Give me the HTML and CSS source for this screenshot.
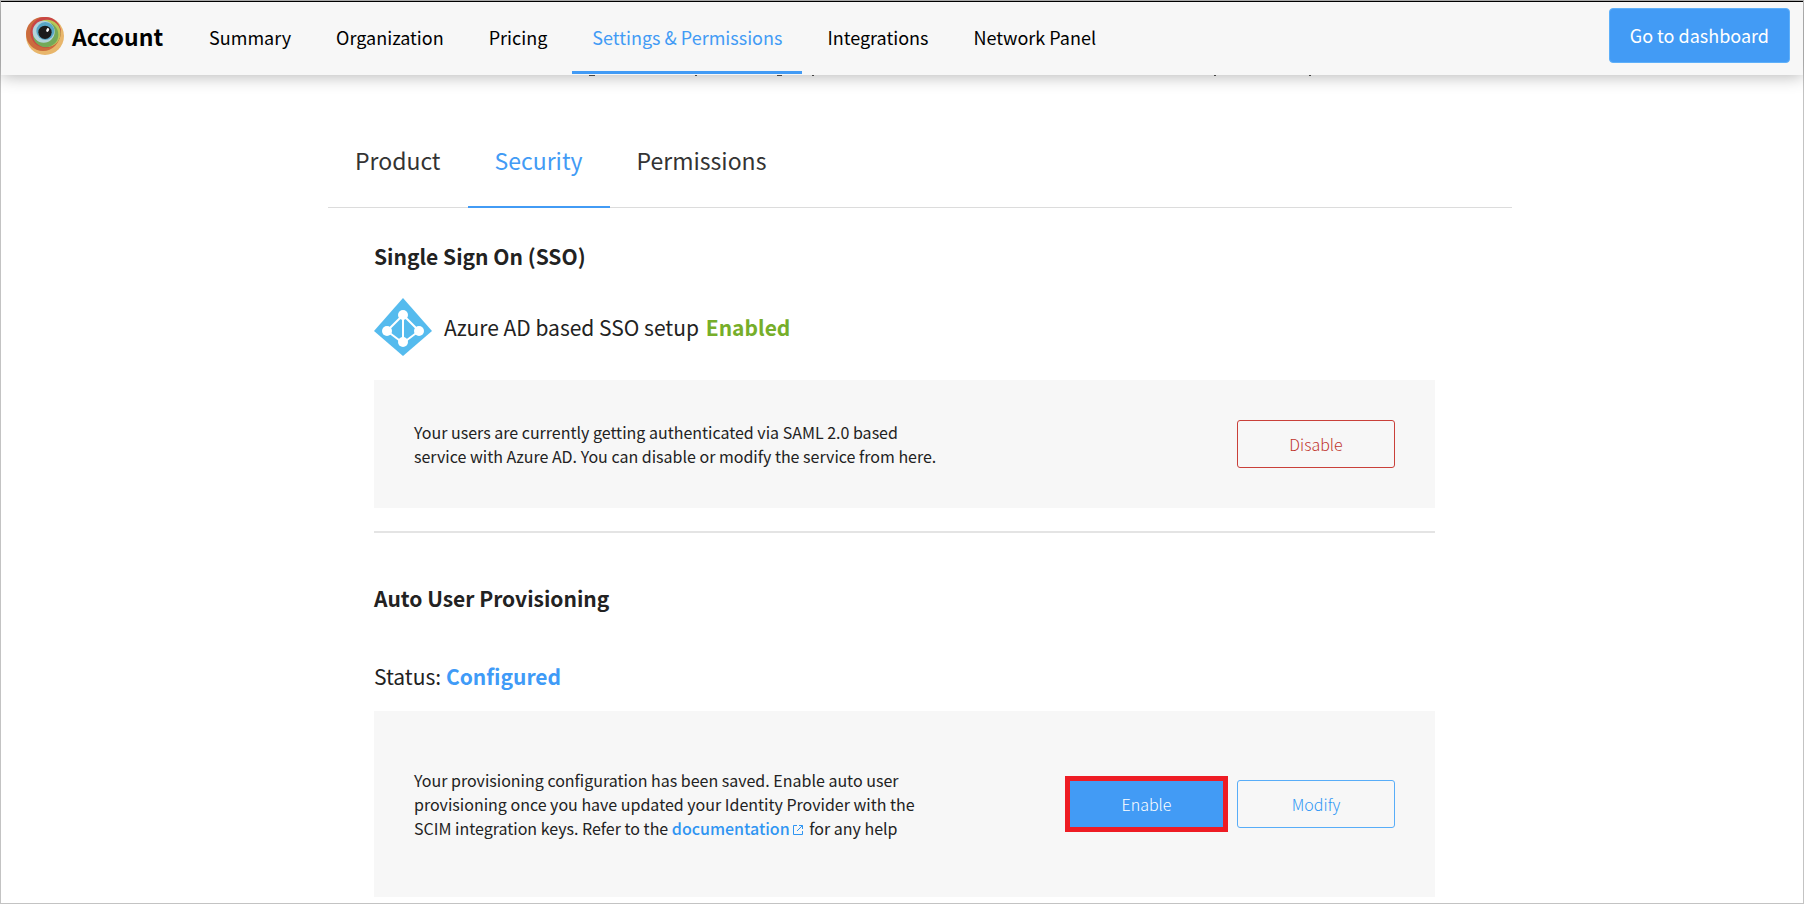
FILE: index.html
```html
<!DOCTYPE html>
<html lang="en">
<head>
<meta charset="utf-8">
<title>Account – Settings &amp; Permissions</title>
<link rel="stylesheet" href="styles.css">
</head>
<body>
<div class="page">
  <header class="topbar">
    <a class="brand" href="#">
      <svg class="brand-logo" viewBox="0 0 114 114" aria-hidden="true">
        <circle cx="57" cy="57" r="57" fill="#e8b66b"/>
        <circle cx="51" cy="51" r="51" fill="#cb6c3e"/>
        <circle cx="59" cy="46" r="46" fill="#c94545"/>
        <circle cx="63" cy="49" r="41" fill="#b9c659"/>
        <circle cx="59" cy="53" r="38" fill="#74a959"/>
        <circle cx="53" cy="44" r="33" fill="#b3d3da"/>
        <circle cx="58" cy="42" r="27" fill="#58a6c6"/>
        <circle cx="57" cy="46" r="20" fill="#1c1c1c"/>
        <ellipse cx="65" cy="39" rx="4" ry="6" fill="#fff" transform="rotate(25 65 39)"/>
      </svg>
      <span>Account</span>
    </a>
    <nav class="nav" aria-label="Account">
      <a class="nav-link" href="#">Summary</a>
      <a class="nav-link" href="#">Organization</a>
      <a class="nav-link" href="#">Pricing</a>
      <a class="nav-link nav-link-active" href="#" aria-current="page">Settings &amp; Permissions</a>
      <a class="nav-link" href="#">Integrations</a>
      <a class="nav-link" href="#">Network Panel</a>
    </nav>
    <button class="button-dashboard" type="button">Go to dashboard</button>
  </header>

  <main class="content">
    <svg class="scrolled-edge" viewBox="0 0 724 1" aria-hidden="true">
      <path d="M0 .5h6M106 .5h2M188 .5h5M223 .5h2M625 .5h2M720 .5h2" stroke="#444"/>
    </svg>
    <div class="tabs">
      <a class="tab" href="#">Product</a>
      <a class="tab tab-active" href="#" aria-current="true">Security</a>
      <a class="tab" href="#">Permissions</a>
    </div>

    <section class="section section-sso">
      <h2 class="section-title">Single Sign On (SSO)</h2>
      <div class="provider">
        <svg class="provider-icon" viewBox="0 0 58 58" aria-hidden="true">
          <path d="M29 0 58 33 29 58 0 33Z" fill="#55bbee"/>
          <path d="M29 17 13 33 29 45 45 33ZM29 17V45" fill="none" stroke="#fff" stroke-width="2"/>
          <g fill="#fff"><circle cx="29" cy="17" r="5"/><circle cx="13" cy="33" r="5"/><circle cx="45" cy="33" r="5"/><circle cx="29" cy="44" r="5"/></g>
        </svg>
        <p class="status-line">Azure AD based SSO setup <strong class="status-enabled">Enabled</strong></p>
      </div>
      <div class="panel">
        <p class="panel-text">Your users are currently getting authenticated via SAML 2.0 based service with Azure AD. You can disable or modify the service from here.</p>
        <div class="actions">
          <button class="button button-danger" type="button">Disable</button>
        </div>
      </div>
    </section>

    <section class="section section-provisioning">
      <h2 class="section-title">Auto User Provisioning</h2>
      <p class="status-line status-provisioning">Status: <strong class="status-configured">Configured</strong></p>
      <div class="panel panel-tall">
        <p class="panel-text">Your provisioning configuration has been saved. Enable auto user provisioning once you have updated your Identity Provider with the SCIM integration keys. Refer to the <a class="doc-link" href="#">documentation<svg class="external" viewBox="0 0 12 12" aria-hidden="true"><path d="M5 1.500H1.500V10.500H10.500V7M7 1.500H10.500V5M10.500 1.500 5 7" fill="none" stroke="currentColor"/></svg></a> for any help</p>
        <div class="actions">
          <span class="highlight"><button class="button button-primary" type="button">Enable</button></span>
          <button class="button button-outline" type="button">Modify</button>
        </div>
      </div>
    </section>
  </main>
</div>
</body>
</html>
```
FILE: styles.css
```css
* { box-sizing: border-box; }

body {
  margin: 0;
  background: #fff;
  color: #222;
  font-family: "Noto Sans CJK JP", "Noto Sans CJK SC", "Noto Sans", sans-serif;
  font-size: 16px;
}

h2, p { margin: 0; }
a { color: inherit; text-decoration: none; }
button { font: inherit; cursor: pointer; }

.page {
  min-height: 100vh;
  border: 1px solid #c3c3c3;
}

.topbar {
  display: flex;
  align-items: stretch;
  height: 74px;
  padding: 0 13px 0 25px;
  border-top: 1px solid #000;
  background: #f7f7f7;
  box-shadow: 0 1px 16px rgba(0, 0, 0, 0.3);
  color: #000;
}

.brand {
  display: flex;
  align-items: center;
  gap: 8px;
  padding-bottom: 6px;
  font-size: 23px;
  font-weight: 700;
}
.brand-logo { width: 38px; height: 38px; }

.nav {
  display: flex;
  gap: 5px;
  margin-left: 26px;
  font-size: 18px;
  font-weight: 400;
}
.nav-link {
  display: flex;
  align-items: center;
  margin-bottom: 1px;
  padding: 0 20px;
  border-bottom: 3px solid transparent;
}
.nav-link-active { border-color: #429bf5; color: #429bf5; }

.button-dashboard {
  align-self: flex-start;
  height: 55px;
  margin: 6px 0 0 auto;
  padding: 0 20px 2px;
  border: 1px solid #5eb0fa;
  border-radius: 4px;
  background: #429bf5;
  color: #fff;
  font-size: 18px;
}

.content {
  max-width: 1220px;
  margin: 0 auto;
  padding-left: 36px;
}

/* Bottom edge of the line scrolled under the top bar */
.scrolled-edge {
  display: block;
  width: 724px;
  height: 1px;
  margin-left: 261px;
}

.tabs {
  display: flex;
  margin-top: 50px;
  border-bottom: 1px solid #dcdcdc;
  color: #333;
  font-size: 23px;
  line-height: 36px;
}
.tab {
  margin-bottom: -1px;
  padding: 16px 27px 28px;
  border-bottom: 2px solid transparent;
}
.tab-active { border-color: #429bf5; color: #429bf5; }

.section { margin: 0 77px 0 46px; }
.section-sso {
  padding: 32px 0 23px;
  border-bottom: 2px solid #e4e4e4;
}
.section-provisioning { padding: 49px 0 6px; }
.section-title {
  font-size: 21px;
  font-weight: 700;
  line-height: 32px;
}

.provider {
  display: flex;
  align-items: center;
  gap: 12px;
  margin: 26px 0 24px;
}
.provider-icon { width: 58px; height: 58px; }

.status-line { font-size: 21px; line-height: 32px; }
.status-provisioning { margin: 46px 0 19px; }
.status-enabled { margin-left: 2px; color: #76ae2a; }
.status-configured { color: #3f9bf7; }

.panel {
  display: flex;
  align-items: center;
  justify-content: space-between;
  min-height: 128px;
  padding: 40px;
  background: #f7f7f7;
}
.panel-tall { min-height: 186px; }
.panel-text {
  max-width: 535px;
  font-size: 16px;
  line-height: 24px;
}
.doc-link { color: #2f95f2; font-weight: 500; }
.external { width: 12px; height: 12px; margin: 0 2px; vertical-align: -1px; }

.actions { display: flex; align-items: center; gap: 9px; }
.button {
  width: 158px;
  height: 48px;
  border: 1px solid;
  border-radius: 3px;
  background: transparent;
  font-size: 16px;
  font-weight: 300;
}
.button-danger { border-color: #c9403a; color: #c0342b; }
.button-outline { border-color: #58adf8; color: #3297f5; }
.button-primary {
  display: block;
  width: 153px;
  height: 46px;
  border: 0;
  border-radius: 0;
  background: #429bf5;
  color: #fff;
}
.highlight { border: 5px solid #ee1c24; }
```
